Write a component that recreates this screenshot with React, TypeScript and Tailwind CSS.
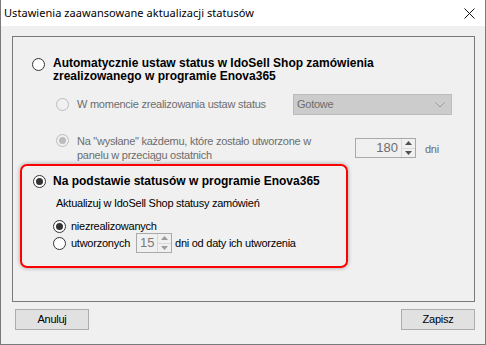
import React from "react";

type RadioProps = {
  checked?: boolean;
  disabled?: boolean;
};

function Radio({ checked = false, disabled = false }: RadioProps) {
  return (
    <span
      className={`flex w-[13px] h-[13px] shrink-0 items-center justify-center rounded-full border ${
        disabled ? "border-[#bcbcbc] bg-[#f0f0f0]" : "border-[#333333] bg-white"
      }`}>
      {checked && (
        <span
          className={`block w-[7px] h-[7px] rounded-full ${
            disabled ? "bg-[#bcbcbc]" : "bg-[#333333]"
          }`}
        />
      )}
    </span>
  );
}

function Spinner({ value, width, align = "right", disabled = false }: { value: string; width: string; align?: "left" | "right"; disabled?: boolean }) {
  return (
    <div className={`flex h-[20px] ${width} border border-[#a9a9a9] bg-[#f0f0f0]`}>
      <span
        className={`flex-1 leading-[18px] px-[3px] ${align === "right" ? "text-right" : "text-left"} ${
          disabled ? "text-[#7a7a7a]" : "text-[#6d6d6d]"
        } text-[13px]`}>
        {value}
      </span>
      <div className="flex w-[14px] flex-col border-l border-[#d9d9d9]">
        <div className="flex flex-1 items-center justify-center border-b border-[#d9d9d9]">
          <svg width="7" height="4" viewBox="0 0 7 4">
            <path d="M0 4 L3.5 0 L7 4 Z" fill={disabled ? "#9a9a9a" : "#505050"} />
          </svg>
        </div>
        <div className="flex flex-1 items-center justify-center">
          <svg width="7" height="4" viewBox="0 0 7 4">
            <path d="M0 0 L3.5 4 L7 0 Z" fill={disabled ? "#9a9a9a" : "#505050"} />
          </svg>
        </div>
      </div>
    </div>
  );
}

export default function App() {
  const sans = "font-['Liberation_Sans',Arial,sans-serif]";
  const txt = "text-[11px] tracking-[-0.25px]";

  return (
    <div
      className={`w-[486px] h-[345px] flex flex-col bg-[#f0f0f0] border-l border-r border-b border-[#7a7a7a] text-[11px] text-black ${sans}`}>
      {/* title bar */}
      <div className="flex h-[26px] shrink-0 items-center justify-between bg-white pl-[3px] pr-[10px]">
        <span className="font-['Noto_Sans',sans-serif] text-[11px] text-black tracking-[0.05px]">
          Ustawienia zaawansowane aktualizacji statusów
        </span>
        <svg width="11" height="11" viewBox="0 0 11 11">
          <path d="M0.5 0.5 L10.5 10.5 M10.5 0.5 L0.5 10.5" stroke="#111" strokeWidth="1" />
        </svg>
      </div>

      {/* group box */}
      <div className="ml-[11px] mt-[10px] w-[463px] h-[266px] border border-[#7a7a7a] flex flex-col">
        <div className="mt-[20px] ml-[19px] flex items-start gap-[8px]">
          <span className="mt-[1px]">
            <Radio />
          </span>
          <span className="font-bold text-[12px] leading-[13px]">
            Automatycznie ustaw status w IdoSell Shop zamówienia
            <br />
            zrealizowanego w programie Enova365
          </span>
        </div>

        <div className="mt-[11px] ml-[43px] flex items-center h-[21px]">
          <Radio disabled />
          <span className={`ml-[8px] w-[216px] text-[#6d6d6d] ${txt}`}>W momencie zrealizowania ustaw status</span>
          <div className="flex h-[21px] w-[159px] items-center justify-between border border-[#bcbcbc] bg-[#cccccc] pl-[3px] pr-[6px]">
            <span className={`text-[#6d6d6d] ${txt}`}>Gotowe</span>
            <svg width="10" height="6" viewBox="0 0 10 6">
              <path d="M0.5 0.5 L5 5 L9.5 0.5" stroke="#9a9a9a" fill="none" strokeWidth="1" />
            </svg>
          </div>
        </div>

        <div className="mt-[18px] ml-[43px] flex items-start">
          <span className="mt-[1px]">
            <Radio checked disabled />
          </span>
          <span className={`ml-[8px] w-[278px] text-[#6d6d6d] leading-[14px] mt-[1px] ${txt}`}>
            Na "wysłane" każdemu, które zostało utworzone w
            <br />
            panelu w przeciągu ostatnich
          </span>
          <div className="mt-[5px]">
            <Spinner value="180" width="w-[61px]" />
          </div>
          <span className={`ml-[9px] mt-[8px] text-[#6d6d6d] ${txt}`}>dni</span>
        </div>

        {/* highlighted section */}
        <div className="mt-[2px] ml-[7px] w-[328px] h-[104px] rounded-[7px] border-2 border-[#ff0000] shadow-[0_0_4px_rgba(0,0,0,0.35)] flex flex-col">
          <div className="mt-[8px] ml-[11px] flex items-center gap-[7px]">
            <Radio checked />
            <span className="font-bold text-[12px] leading-[14px]">Na podstawie statusów w programie Enova365</span>
          </div>
          <span className={`mt-[8px] ml-[34px] leading-[14px] ${txt}`}>Aktualizuj w IdoSell Shop statusy zamówień</span>
          <div className="mt-[9px] ml-[31px] flex items-center gap-[5px] h-[14px]">
            <Radio checked />
            <span className={txt}>niezrealizowanych</span>
          </div>
          <div className="mt-[1px] ml-[31px] flex items-center h-[18px]">
            <Radio />
            <span className={`ml-[5px] ${txt}`}>utworzonych</span>
            <div className="ml-[6px]">
              <Spinner value="15" width="w-[36px]" align="left" disabled />
            </div>
            <span className={`ml-[3px] ${txt}`}>dni od daty ich utworzenia</span>
          </div>
        </div>
      </div>

      {/* buttons */}
      <div className="mt-[7px] flex justify-between pl-[14px] pr-[10px]">
        <button className={`h-[21px] w-[74px] border border-[#adadad] bg-[#e1e1e1] text-black ${txt}`}>Anuluj</button>
        <button className={`h-[21px] w-[74px] border border-[#adadad] bg-[#e1e1e1] text-black ${txt}`}>Zapisz</button>
      </div>
    </div>
  );
}
